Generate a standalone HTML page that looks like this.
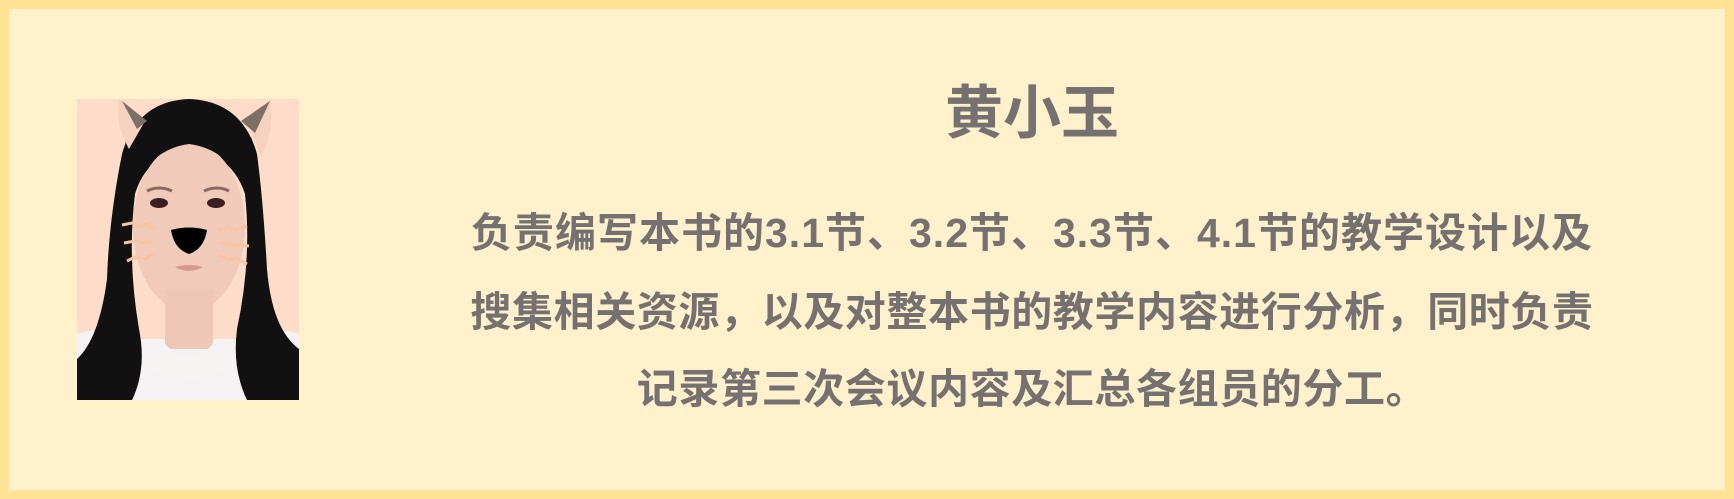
<!DOCTYPE html>
<html><head><meta charset="utf-8"><style>
html,body{margin:0;padding:0}
body{width:1734px;height:499px;position:relative;overflow:hidden;background:#FFE395}
.inner{position:absolute;left:9px;top:9px;width:1716px;height:481px;background:#FFF1CB}
.t{position:absolute;left:332px;width:1400px;text-align:center;color:#767171;font-weight:bold;font-family:"Liberation Sans","Noto Sans CJK SC",sans-serif;white-space:nowrap}
.photo{position:absolute;left:77px;top:99px;width:222px;height:301px}
</style></head><body>
<div class="inner"></div>
<svg class="photo" viewBox="0 0 222 301" width="222" height="301">
<rect width="222" height="301" fill="#FDDDC9"/>
<path d="M0 235 Q30 225 60 240 L160 240 Q195 225 222 235 L222 301 L0 301Z" fill="#F4F2F2"/>
<path d="M112 0 Q60 2 45 55 Q32 120 30 180 Q22 240 0 260 L0 301 L55 301 Q70 270 62 230 Q50 160 58 95 Q70 55 112 50 Q155 55 168 95 Q175 160 160 230 Q155 270 170 301 L222 301 L222 250 Q195 230 190 170 Q186 100 180 55 Q165 2 112 0Z" fill="#111"/>
<ellipse cx="112" cy="128" rx="56" ry="85" fill="#F1CBBA"/>
<rect x="88" y="190" width="48" height="60" fill="#EFC7B6"/>
<path d="M88 245 Q112 270 136 245 L150 270 Q112 290 74 270Z" fill="#F7F3F2"/>
<path d="M112 2 Q150 5 175 40 Q172 70 168 88 Q150 50 112 45 Q75 50 57 88 Q50 65 48 40 Q72 5 112 2Z" fill="#111"/>
<ellipse cx="82" cy="104" rx="9" ry="5" fill="#3a2020"/>
<ellipse cx="139" cy="104" rx="9" ry="5" fill="#3a2020"/>
<path d="M70 92 Q82 86 95 92 M127 92 Q140 86 152 92" stroke="#8a6a60" stroke-width="3" fill="none"/>
<path d="M94 131 Q112 126 130 131 Q127 150 112 155 Q97 150 94 131Z" fill="#000"/>
<path d="M98 168 Q112 164 126 168 Q112 176 98 168Z" fill="#D79A90"/>
<g stroke="#F9C4A0" stroke-width="3" fill="none">
<path d="M45 126 L55 124 L62 128 L70 125 L78 130"/>
<path d="M47 144 L58 142 L68 144 L76 144"/>
<path d="M50 162 L58 158 L68 160 L78 154"/>
<path d="M140 132 L150 128 L160 131 L170 127"/>
<path d="M142 144 L152 145 L162 146 L172 147"/>
<path d="M142 156 L150 160 L160 160 L170 165"/>
</g>
<path d="M42 0 L68 22 L52 50 Q38 25 42 0Z" fill="#F5D1C0"/>
<path d="M45 2 L70 22 L60 30Z" fill="#7d6e66"/>
<path d="M193 0 L172 26 L184 58 Q198 30 193 0Z" fill="#F5D1C0"/>
<path d="M193 2 L164 22 L178 34Z" fill="#7d6e66"/>
</svg>
<div class="t" style="top:81px;font-size:58px;line-height:66px">黄小玉</div>
<div class="t" style="top:208px;font-size:41px;line-height:50px;letter-spacing:1px">负责编写本书的3.1节、3.2节、3.3节、4.1节的教学设计以及</div>
<div class="t" style="top:287px;font-size:41px;line-height:50px;letter-spacing:0.6px">搜集相关资源，以及对整本书的教学内容进行分析，同时负责</div>
<div class="t" style="top:364px;font-size:41px;line-height:50px;letter-spacing:0.6px">记录第三次会议内容及汇总各组员的分工。</div>
</body></html>
